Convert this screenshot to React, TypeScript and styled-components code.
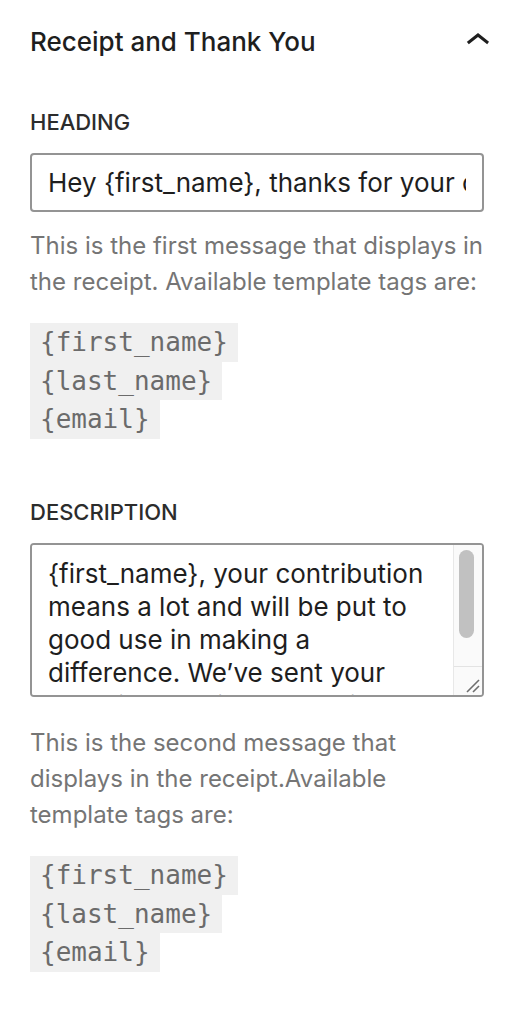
import React from "react";
import styled, { createGlobalStyle } from "styled-components";

const GlobalStyle = createGlobalStyle`
  html, body {
    margin: 0;
    padding: 0;
    background: #ffffff;
  }
  body {
    font-family: Inter, "Noto Sans", "Liberation Sans", sans-serif;
    color: #1e1e1e;
    -webkit-font-smoothing: antialiased;
  }
  * { box-sizing: border-box; }
`;

const Panel = styled.section`
  padding: 0 38px 40px 30px;
  width: 522px;
`;

const Header = styled.div`
  display: flex;
  align-items: center;
  justify-content: space-between;
  padding-top: 17px;
  margin-right: -18px;
`;

const Title = styled.h2`
  margin: 0;
  font-size: 26px;
  font-weight: 500;
  line-height: 31px;
  color: #1e1e1e;
`;

const ToggleIcon = styled.svg`
  width: 48px;
  height: 48px;
  fill: #1e1e1e;
  flex: none;
`;

const Field = styled.div<{ $gap: number }>`
  display: flex;
  flex-direction: column;
  align-items: stretch;
  margin-top: ${(p) => p.$gap}px;
`;

const Label = styled.label`
  font-size: 22px;
  font-weight: 500;
  line-height: 31px;
  text-transform: uppercase;
  color: #2c2c2c;
  margin-bottom: 15px;
`;

const TextInput = styled.input`
  height: 59px;
  width: 100%;
  margin: 0;
  padding: 0 16px;
  border: 2px solid #949494;
  border-radius: 4px;
  font-family: inherit;
  font-size: 26px;
  color: #1e1e1e;
  background: #fff;
  outline: none;
`;

const AreaWrap = styled.div`
  position: relative;
  width: 100%;
`;

const TextArea = styled.textarea`
  display: block;
  width: 100%;
  height: 154px;
  margin: 0;
  padding: 12px 45px 12px 16px;
  border: 2px solid #949494;
  border-radius: 4px;
  font-family: inherit;
  font-size: 26px;
  line-height: 33px;
  color: #1e1e1e;
  background: #fff;
  outline: none;
  resize: vertical;
  overflow-y: scroll;
`;

const ScrollTrack = styled.div`
  position: absolute;
  top: 2px;
  right: 2px;
  bottom: 2px;
  width: 29px;
  display: flex;
  flex-direction: column;
  background: #fafafa;
  border-left: 1px solid #e8e8e8;
  border-radius: 0 2px 2px 0;
  pointer-events: none;
`;

const ScrollThumb = styled.div`
  margin: 5px 8px 0 5px;
  height: 88px;
  border-radius: 8px;
  background: #c1c1c1;
`;

const ScrollCorner = styled.div`
  margin-top: auto;
  height: 29px;
  border-top: 1px solid #e3e3e3;
  display: flex;
  align-items: flex-end;
  justify-content: flex-end;
`;

const Grip = styled.svg`
  width: 16px;
  height: 16px;
  margin: 0 2px 2px 0;
  stroke: #6e6e6e;
  stroke-width: 1.6;
`;

const Help = styled.p<{ $top: number }>`
  margin: ${(p) => p.$top}px 0 0;
  font-size: 24px;
  line-height: 36px;
  color: #757575;
`;

const TagList = styled.div`
  display: flex;
  flex-direction: column;
  align-items: flex-start;
  margin-top: 23px;
`;

const Tag = styled.code`
  display: block;
  padding: 0 10px;
  font-family: "DejaVu Sans Mono", "Liberation Mono", monospace;
  font-size: 26px;
  line-height: 38.67px;
  color: #6b6b6b;
  background: #f0f0f0;
`;

const tags = ["{first_name}", "{last_name}", "{email}"];

const TagBlock = () => (
  <TagList>
    {tags.map((t) => (
      <Tag key={t}>{t}</Tag>
    ))}
  </TagList>
);

export default function App() {
  return (
    <>
      <GlobalStyle />
      <Panel>
        <Header>
          <Title>Receipt and Thank You</Title>
          <ToggleIcon viewBox="0 0 24 24" aria-hidden="true">
            <path d="M6.5 12.4L12 8l5.5 4.4-.9 1.2L12 10l-4.6 3.6-1-1.2z" />
          </ToggleIcon>
        </Header>

        <Field $gap={42}>
          <Label htmlFor="receipt-heading">Heading</Label>
          <TextInput
            id="receipt-heading"
            type="text"
            defaultValue="Hey {first_name}, thanks for your contribution!"
          />
          <Help $top={16}>
            This is the first message that displays in the receipt. Available template tags are:
          </Help>
          <TagBlock />
        </Field>

        <Field $gap={58}>
          <Label htmlFor="receipt-description">Description</Label>
          <AreaWrap>
            <TextArea
              id="receipt-description"
              defaultValue={
                "{first_name}, your contribution means a lot and will be put to good use in making a difference. We\u2019ve sent your donation receipt to {email}."
              }
            />
            <ScrollTrack aria-hidden="true">
              <ScrollThumb />
              <ScrollCorner>
                <Grip viewBox="0 0 16 16">
                  <line x1="3" y1="15" x2="15" y2="3" />
                  <line x1="9" y1="15" x2="15" y2="9" />
                </Grip>
              </ScrollCorner>
            </ScrollTrack>
          </AreaWrap>
          <Help $top={28}>
            This is the second message that displays in the receipt.Available template tags are:
          </Help>
          <TagBlock />
        </Field>
      </Panel>
    </>
  );
}
